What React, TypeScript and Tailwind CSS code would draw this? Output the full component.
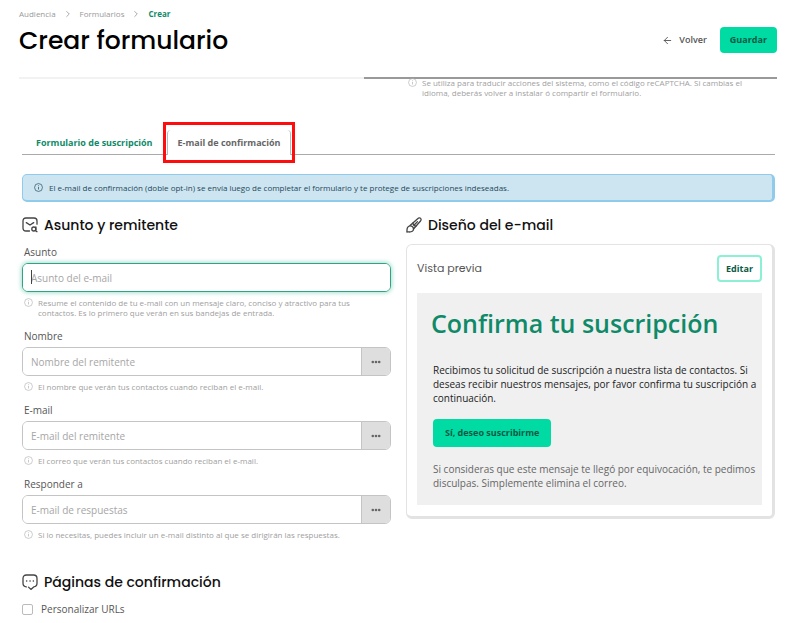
import { useState } from 'react'
import type { ReactNode } from 'react'
import { ArrowLeft, ChevronRight } from 'lucide-react'
import { clsx } from 'clsx'

interface Field {
  id: string
  label: string
  placeholder: string
  help: string
  hasPicker: boolean
}

const fields: Field[] = [
  {
    id: 'subject',
    label: 'Asunto',
    placeholder: 'Asunto del e-mail',
    help: 'Resume el contenido de tu e-mail con un mensaje claro, conciso y atractivo para tus contactos. Es lo primero que verán en sus bandejas de entrada.',
    hasPicker: false,
  },
  {
    id: 'name',
    label: 'Nombre',
    placeholder: 'Nombre del remitente',
    help: 'El nombre que verán tus contactos cuando reciban el e-mail.',
    hasPicker: true,
  },
  {
    id: 'email',
    label: 'E-mail',
    placeholder: 'E-mail del remitente',
    help: 'El correo que verán tus contactos cuando reciban el e-mail.',
    hasPicker: true,
  },
  {
    id: 'reply',
    label: 'Responder a',
    placeholder: 'E-mail de respuestas',
    help: 'Si lo necesitas, puedes incluir un e-mail distinto al que se dirigirán las respuestas.',
    hasPicker: true,
  },
]

function InfoIcon({ className }: { className?: string }) {
  return (
    <svg viewBox="0 0 16 16" fill="none" stroke="currentColor" className={clsx('shrink-0', className)}>
      <circle cx="8" cy="8" r="7" strokeWidth="1.2" />
      <path d="M8 7v4.5M8 4.2v1.4" strokeWidth="1.3" />
    </svg>
  )
}

function MailIcon() {
  return (
    <svg viewBox="0 0 16 16" fill="none" stroke="#444" strokeWidth="1.3" strokeLinecap="round" strokeLinejoin="round" className="size-4">
      <path d="M7.5 14H4C2 14 1 13 1 11V4c0-2 1-3 3-3h8c2 0 3 1 3 3v3.2" />
      <path d="M4.3 5.6 8 8l3.7-2.4" />
      <circle cx="11.8" cy="12" r="2" />
      <path d="M13.9 10v3.7c0 .6.4 1 1.1 1" />
    </svg>
  )
}

function BrushIcon() {
  return (
    <svg viewBox="0 0 16 16" fill="none" stroke="#444" strokeWidth="1.3" strokeLinecap="round" strokeLinejoin="round" className="size-4">
      <path d="M4 8.6 11.7 1.700c1-.9 2.300-1 2.900-.3.700.7.500 1.900-.3 2.900L7.500 12" />
      <path d="M.9 15c.2-1.500-.3-3.400.9-4.900 1.200-1.400 3.400-1.600 4.800-.3 1.300 1.400 1.200 3.600-.3 4.500-1.500 1.100-3.500.5-5.400.7Z" />
      <path d="M6.900 6.200c.2 1.700 1.200 2.800 3 3M8.700 7.500l2.800-2.900" />
    </svg>
  )
}

function ChatIcon() {
  return (
    <svg viewBox="0 0 16 16" fill="none" stroke="#444" strokeWidth="1.3" strokeLinecap="round" strokeLinejoin="round" className="size-4">
      <path d="M4.300 12.900C2 12.700 1 11.400 1 9.300V4.500C1 2.200 2.200 1 4.500 1h7C13.800 1 15 2.200 15 4.500v4.800c0 2.200-1.100 3.400-3.300 3.600L8.900 15.400 6.500 13.100" />
      <path d="M4.600 7h.1M8 7h.1M11.300 7h.1" strokeWidth="1.500" />
    </svg>
  )
}

function Help({ children }: { children: ReactNode }) {
  return (
    <p className="flex gap-[5px] pr-4 pl-[2px] text-[8px] leading-[10px] text-[#a0a0a0]">
      <InfoIcon className="size-[9px] text-[#b5b5b5]" />
      <span>{children}</span>
    </p>
  )
}

function SectionTitle({ icon, children }: { icon: ReactNode; children: ReactNode }) {
  return (
    <h2 className="flex h-5 items-center gap-[6px] font-['Poppins','Inter',sans-serif] text-[14px] font-medium leading-5 text-[#111]">
      {icon}
      {children}
    </h2>
  )
}

export default function App() {
  const [values, setValues] = useState<Record<string, string>>({})
  const [customUrls, setCustomUrls] = useState(false)

  return (
    <div className="min-h-screen bg-white pb-2 font-['Open_Sans',sans-serif] text-[#555]">
      {/* Header */}
      <header className="pr-3 pl-[19px]">
        <nav className="flex items-center gap-[7px] pt-2 text-[8px] leading-3 text-[#999]">
          <a href="#audiencia">Audiencia</a>
          <ChevronRight className="size-[10px]" strokeWidth={2} />
          <a href="#formularios">Formularios</a>
          <ChevronRight className="size-[10px]" strokeWidth={2} />
          <a href="#crear" className="font-bold text-[#0f8a68]">Crear</a>
        </nav>
        <div className="flex h-[57px] items-start justify-between">
          <h1 className="pt-1 font-['Poppins','Inter',sans-serif] text-[25px] font-medium leading-[34px] text-black">
            Crear formulario
          </h1>
          <div className="flex items-center gap-[13px] pt-[7px] text-[9px] font-semibold">
            <a href="#volver" className="flex items-center gap-[6px] text-[#555]">
              <ArrowLeft className="size-[11px]" strokeWidth={2} />
              Volver
            </a>
            <button className="h-[26px] rounded bg-[#00dba3] px-[10px] font-bold text-[#0a5a45]">Guardar</button>
          </div>
        </div>
        <div className="flex h-[2px]">
          <div className="w-[345px] bg-[#f2f2f2]" />
          <div className="flex-1 bg-[#999]" />
        </div>
      </header>

      <main className="-mt-px pr-[14px] pl-[22px]">
        <div className="grid grid-cols-2 gap-[15px]">
          <div className="col-start-2">
            <Help>
              Se utiliza para traducir acciones del sistema, como el código reCAPTCHA. Si cambias el idioma, deberás volver
              a instalar ó compartir el formulario.
            </Help>
          </div>
        </div>

        {/* Tabs */}
        <div role="tablist" className="mt-8 flex h-[25px] border-b border-[#aaa] pl-[14px] text-[9px] font-bold">
          <button role="tab" aria-selected="false" className="pt-px pr-[14px] text-[#0f8a68]">
            Formulario de suscripción
          </button>
          <button
            role="tab"
            aria-selected="true"
            className="relative -mb-px rounded-t border-x border-[#bbb] bg-white px-[10px] text-[#666]"
          >
            E-mail de confirmación
            <span className="absolute -inset-x-[5px] -top-2 -bottom-2 border-3 border-[#fd0d0d]" />
          </button>
        </div>

        <div
          role="status"
          className="mt-[19px] flex h-7 items-center gap-[6px] rounded-[5px] border border-r-3 border-b-2 border-[#8fcbea] bg-[#cde5f1] px-[11px] text-[8px] text-[#24485a]"
        >
          <InfoIcon className="size-[9px]" />
          El e-mail de confirmación (doble opt-in) se envía luego de completar el formulario y te protege de suscripciones
          indeseadas.
        </div>

        <div className="mt-[13px] grid grid-cols-2 gap-[15px]">
          <section>
            <SectionTitle icon={<MailIcon />}>Asunto y remitente</SectionTitle>
            <div className="mt-[9px] flex flex-col gap-[10px]">
              {fields.map((field) => (
                <div key={field.id}>
                  <label htmlFor={field.id} className="block pl-[2px] text-[10px] leading-4 text-[#555]">
                    {field.label}
                  </label>
                  <div
                    className={clsx(
                      'relative mt-[3px] mb-[6px] flex h-[29px] overflow-hidden rounded-md border',
                      field.hasPicker ? 'border-[#c4c4c4]' : 'border-[#2fa384] shadow-[0_0_4px_1px_#a5e0cf]'
                    )}
                  >
                    <input
                      id={field.id}
                      value={values[field.id] ?? ''}
                      onChange={(e) => setValues({ ...values, [field.id]: e.target.value })}
                      placeholder={field.placeholder}
                      className="min-w-0 flex-1 bg-white px-2 pt-px text-[10px] outline-none placeholder:text-[#a6a6a6]"
                    />
                    {!field.hasPicker && <span className="absolute top-[6px] left-2 h-[14px] w-px bg-[#444]" />}
                    {field.hasPicker && (
                      <button
                        aria-label={`Opciones de ${field.label}`}
                        className="flex w-[29px] items-center justify-center border-l border-[#c4c4c4] bg-[#dedede]"
                      >
                        <svg viewBox="0 0 10 4" fill="#666" className="h-1 w-[10px]">
                          <circle cx="1.8" cy="2" r="1.3" />
                          <circle cx="5" cy="2" r="1.3" />
                          <circle cx="8.2" cy="2" r="1.3" />
                        </svg>
                      </button>
                    )}
                  </div>
                  <Help>{field.help}</Help>
                </div>
              ))}
            </div>
          </section>

          <section>
            <SectionTitle icon={<BrushIcon />}>Diseño del e-mail</SectionTitle>
            <div className="mt-[9px] rounded-md border border-r-3 border-b-3 border-[#e3e3e3] px-[10px] pt-[10px] pb-[11px]">
              <div className="flex items-center justify-between">
                <h3 className="font-['Poppins','Inter',sans-serif] text-[11px]">Vista previa</h3>
                <button className="h-[27px] rounded border-2 border-[#8cf0d5] px-[7px] text-[9px] font-bold text-[#0a5a45]">
                  Editar
                </button>
              </div>
              {/* E-mail preview */}
              <div className="mt-[11px] bg-[#f0f0f0] pt-[14px] pb-[15px] pl-[14px]">
                <h4 className="text-[25px] font-semibold leading-8 text-[#0f8a68]">Confirma tu suscripción</h4>
                <div className="pt-6 pl-[2px] text-[10px] leading-[14px]">
                  <p className="text-[#222]">
                    Recibimos tu solicitud de suscripción a nuestra lista de contactos. Si deseas recibir nuestros
                    mensajes, por favor confirma tu suscripción a continuación.
                  </p>
                  <button className="mt-[14px] h-7 rounded-sm bg-[#00dba3] px-3 text-[9px] font-bold text-[#0a5a45]">
                    Sí, deseo suscribirme
                  </button>
                  <p className="mt-[15px] text-[#666]">
                    Si consideras que este mensaje te llegó por equivocación, te pedimos disculpas. Simplemente elimina
                    el correo.
                  </p>
                </div>
              </div>
            </div>
          </section>
        </div>

        <section className="mt-8">
          <SectionTitle icon={<ChatIcon />}>Páginas de confirmación</SectionTitle>
          <label className="mt-[9px] flex items-center gap-2 text-[10px] leading-4">
            <input
              type="checkbox"
              checked={customUrls}
              onChange={(e) => setCustomUrls(e.target.checked)}
              className="size-[11px] appearance-none rounded-xs border border-[#bbb] checked:bg-[#00dba3]"
            />
            Personalizar URLs
          </label>
        </section>
      </main>
    </div>
  )
}
